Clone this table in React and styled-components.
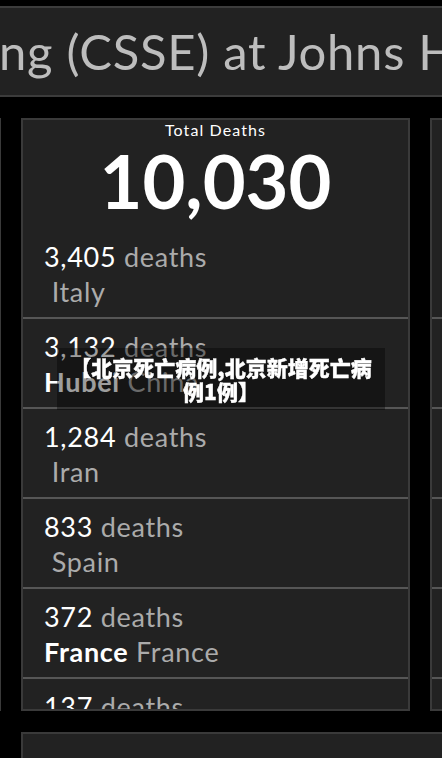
import React from 'react';
import styled, { createGlobalStyle } from 'styled-components';

const GlobalStyle = createGlobalStyle`
  html, body {
    margin: 0;
    background: #000;
    overflow: hidden;
  }
  body {
    font-family: Lato, 'Liberation Sans', sans-serif;
  }
`;

const Screen = styled.div`
  height: 758px;
  padding-top: 6px;
  box-sizing: border-box;
  overflow: hidden;
`;

const Header = styled.header`
  height: 91px;
  box-sizing: border-box;
  margin: 0 -20px;
  background: #222;
  border-top: 2px solid #3c3c3c;
  border-bottom: 2px solid #3c3c3c;
  display: flex;
  align-items: center;
  overflow: hidden;
`;

const HeaderTitle = styled.h1`
  margin: 0 0 0 19px;
  font-size: 49px;
  font-weight: 400;
  letter-spacing: 0.7px;
  line-height: 1;
  white-space: nowrap;
  color: #bdbdbd;
`;

const PanelRow = styled.div`
  display: grid;
  grid-template-columns: 100px 389px 300px;
  gap: 20px;
  margin: 21px 0 0 -99px;
`;

const Panel = styled.section`
  height: 593px;
  box-sizing: border-box;
  background: #222;
  border: 2px solid #3a3a3a;
  overflow: hidden;
  display: flex;
  flex-direction: column;
`;

const PanelTitle = styled.div`
  margin-top: 1px;
  font-size: 16px;
  letter-spacing: 1.1px;
  line-height: 18px;
  text-align: center;
  color: #fff;
`;

const BigNumber = styled.div`
  margin-top: 5px;
  font-size: 74px;
  font-weight: 700;
  line-height: 74px;
  text-align: center;
  color: #fff;
`;

const List = styled.ul`
  list-style: none;
  margin: 11px 0 0;
  padding: 0;
`;

const Row = styled.li`
  height: 90px;
  box-sizing: border-box;
  padding: 10px 21px 0;
  border-bottom: 2px solid #565656;
  font-size: 27px;
  letter-spacing: 0.7px;
  line-height: 35px;
  white-space: pre;
  &:last-child {
    border-bottom: none;
  }
`;

const Count = styled.span`
  color: #fff;
`;

const Muted = styled.span`
  color: #ababab;
`;

const Province = styled.span`
  color: #fff;
  font-weight: 700;
`;

const Spacer = styled.div`
  height: ${p => p.h}px;
  flex: none;
`;

const BottomPanel = styled.section`
  height: 80px;
  margin: 21px -20px 0 21px;
  background: #222;
  border: 2px solid #3a3a3a;
`;

const Notice = styled.div`
  position: fixed;
  left: 50%;
  top: 50%;
  transform: translate(-50%, -50%);
  width: 328px;
  box-sizing: border-box;
  padding: 7px 6px;
  background: rgba(0, 0, 0, 0.38);
  color: #fff;
  font-family: 'Noto Sans CJK SC', sans-serif;
  font-weight: 900;
  -webkit-text-stroke: 0.4px #fff;
  font-size: 21px;
  line-height: 24px;
  text-align: center;
`;

const deaths = [
  { count: '3,405', province: '', country: 'Italy' },
  { count: '3,132', province: 'Hubei', country: 'China' },
  { count: '1,284', province: '', country: 'Iran' },
  { count: '833', province: '', country: 'Spain' },
  { count: '372', province: 'France', country: 'France' },
  { count: '137', province: 'United Kingdom', country: 'United Kingdom' },
  { count: '108', province: 'Washington', country: 'US' },
];

function App() {
  return (
    <Screen>
      <GlobalStyle />
      <Header>
        <HeaderTitle>ng (CSSE) at Johns Hopkins University</HeaderTitle>
      </Header>
      <PanelRow>
        <Panel />
        <Panel>
          <PanelTitle>Total Deaths</PanelTitle>
          <BigNumber>10,030</BigNumber>
          <List>
            {deaths.map(d => (
              <Row key={d.count}>
                <Count>{d.count}</Count> <Muted>deaths</Muted>
                {'\n'}
                <Province>{d.province}</Province> <Muted>{d.country}</Muted>
              </Row>
            ))}
          </List>
        </Panel>
        <Panel>
          <Spacer h={98} />
          <List>
            {deaths.map(d => (
              <Row key={d.count} />
            ))}
          </List>
        </Panel>
      </PanelRow>
      <BottomPanel />
      <Notice>【北京死亡病例,北京新增死亡病例1例】</Notice>
    </Screen>
  );
}

export default App;
